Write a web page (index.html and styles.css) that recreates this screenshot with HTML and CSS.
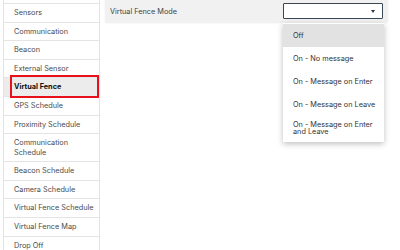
FILE: index.html
```html
<!DOCTYPE html>
<html>
<head>
<meta charset="utf-8">
<link rel="stylesheet" href="styles.css">
</head>
<body>
<div class="page">
  <nav class="sidebar">
    <ul class="menu">
      <li class="item">Sensors</li>
      <li class="item">Communication</li>
      <li class="item">Beacon</li>
      <li class="item">External Sensor</li>
      <li class="item active">Virtual Fence</li>
      <li class="item">GPS Schedule</li>
      <li class="item">Proximity Schedule</li>
      <li class="item wrap">Communication Schedule</li>
      <li class="item">Beacon Schedule</li>
      <li class="item">Camera Schedule</li>
      <li class="item">Virtual Fence Schedule</li>
      <li class="item">Virtual Fence Map</li>
      <li class="item">Drop Off</li>
    </ul>
  </nav>
  <main class="main">
    <div class="card">
      <span class="label">Virtual Fence Mode</span>
      <div class="select-wrap">
        <div class="select"><span class="caret"></span></div>
        <ul class="dropdown">
          <li class="opt selected">Off</li>
          <li class="opt">On - No message</li>
          <li class="opt">On - Message on Enter</li>
          <li class="opt">On - Message on Leave</li>
          <li class="opt two">On - Message on Enter and Leave</li>
        </ul>
      </div>
    </div>
  </main>
</div>
</body>
</html>
```
FILE: styles.css
```css
* { box-sizing: border-box; }
html, body { margin: 0; padding: 0; background: #fff; }
body {
  font-family: "Inter", "Noto Sans", sans-serif;
  font-size: 7.3px;
  color: #444;
  width: 400px;
  height: 250px;
  overflow: hidden;
}
.page {
  display: flex;
  align-items: flex-start;
  gap: 5px;
  padding-left: 3px;
}
.sidebar {
  width: 97px;
  flex: none;
  border-left: 1px solid #e4e4e4;
  border-right: 1px solid #e4e4e4;
  padding-top: 3px;
  height: 260px;
}
.menu {
  list-style: none;
  margin: 0;
  padding: 0;
  border-top: 1px solid #e4e4e4;
}
.item {
  position: relative;
  padding: 4.1px 10px;
  line-height: 9.4px;
  border-bottom: 1px solid #e4e4e4;
  color: #4a4a4a;
  white-space: nowrap;
}
.item.wrap {
  white-space: normal;
  padding-right: 24px;
}
.item.active {
  background: #ececec;
  color: #111;
  font-weight: 700;
}
.item.active::after {
  content: "";
  position: absolute;
  left: 6px;
  right: 0;
  top: -3px;
  bottom: -2px;
  border: 2px solid #e8101a;
}
.main {
  flex: 1;
  padding-right: 12px;
}
.card {
  display: flex;
  align-items: center;
  justify-content: space-between;
  background: #f1f1f1;
  height: 22px;
  padding: 0 5px;
  border-radius: 0 0 2px 2px;
  box-shadow: 0 1px 2px rgba(0,0,0,0.08);
}
.label { color: #444; }
.select-wrap { position: relative; }
.select {
  width: 100px;
  height: 16px;
  border: 1px solid #3a4756;
  border-radius: 1px;
  background: #fff;
  position: relative;
}
.caret {
  position: absolute;
  right: 7px;
  top: 6px;
  border-left: 2.5px solid transparent;
  border-right: 2.5px solid transparent;
  border-top: 3px solid #333;
}
.dropdown {
  position: absolute;
  top: 20px;
  left: 0;
  width: 101px;
  list-style: none;
  margin: 0;
  padding: 1px 0 3px;
  background: #fff;
  box-shadow: 0 2px 6px rgba(0,0,0,0.25);
  z-index: 5;
}
.opt {
  height: 23px;
  display: flex;
  align-items: center;
  padding: 0 10px;
  color: #333;
  white-space: nowrap;
}
.opt.selected { background: #e2e2e2; }
.opt.two {
  height: 23px;
  line-height: 7px;
  white-space: normal;
}
```
